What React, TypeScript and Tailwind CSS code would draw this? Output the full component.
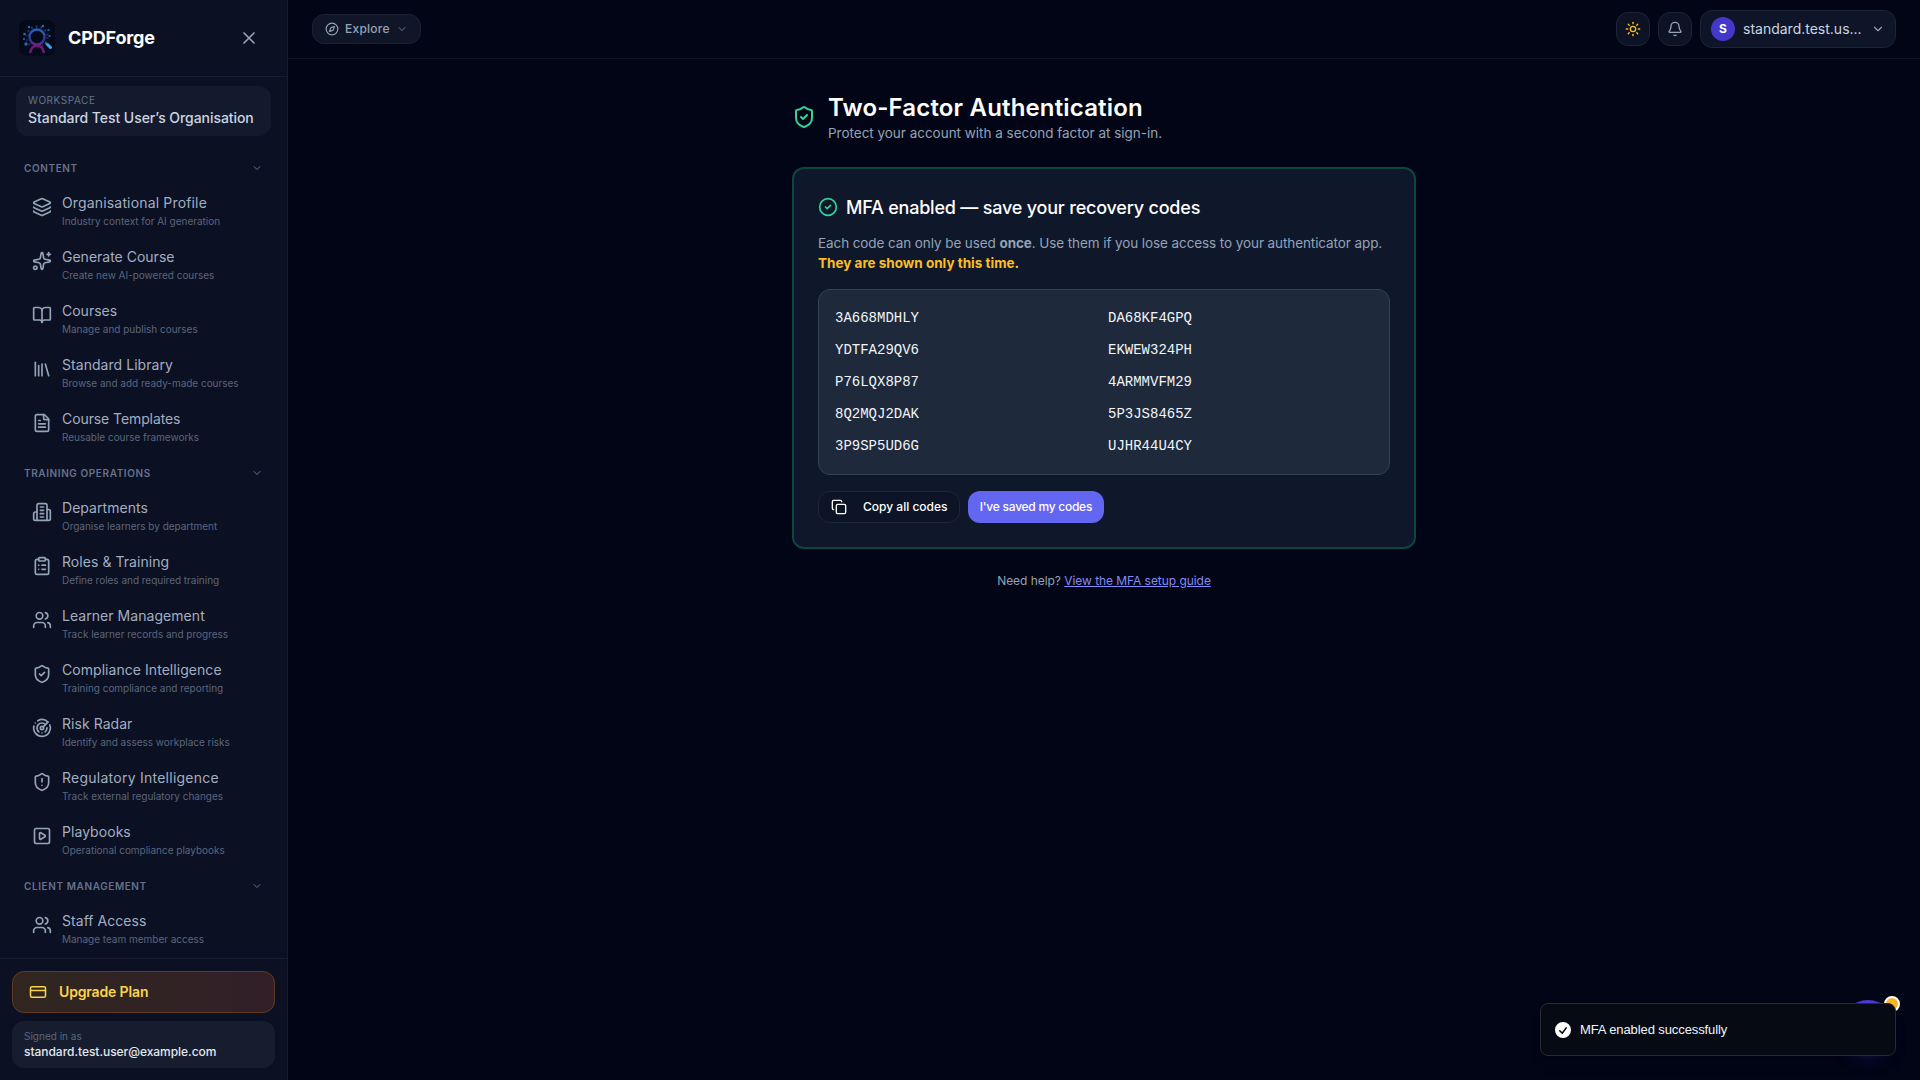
import {
  Bell,
  BookOpen,
  ChevronDown,
  CircleCheck,
  ClipboardList,
  Compass,
  Copy,
  CreditCard,
  FileText,
  Layers,
  Radar,
  ShieldAlert,
  ShieldCheck,
  Sparkles,
  SquarePlay,
  Sun,
  Users,
  X,
} from "lucide-react";
import type { ComponentType, ReactNode } from "react";

type IconType = ComponentType<{ className?: string }>;

interface NavItem {
  icon: IconType;
  title: string;
  hint: string;
  tracking?: string;
}

// Three upright books and one leaning
function LibraryIcon({ className }: { className?: string }) {
  return (
    <svg
      className={className}
      viewBox="0 0 24 24"
      fill="none"
      stroke="currentColor"
      strokeWidth={2}
      strokeLinecap="round"
      strokeLinejoin="round"
    >
      <path d="m16 6 4 14" />
      <path d="M12 6v14" />
      <path d="M8 8v12" />
      <path d="M4 4v16" />
    </svg>
  );
}

function DepartmentsIcon({ className }: { className?: string }) {
  return (
    <svg
      className={className}
      viewBox="0 0 24 24"
      fill="none"
      stroke="currentColor"
      strokeWidth={2}
      strokeLinecap="round"
      strokeLinejoin="round"
    >
      <path d="M6 22V4a2 2 0 0 1 2-2h8a2 2 0 0 1 2 2v18Z" />
      <path d="M6 12H4a2 2 0 0 0-2 2v6a2 2 0 0 0 2 2h2" />
      <path d="M18 9h2a2 2 0 0 1 2 2v9a2 2 0 0 1-2 2h-2" />
      <path d="M10 6h4M10 10h4M10 14h4M10 18h4" />
    </svg>
  );
}

const SECTIONS: { label: string; items: NavItem[] }[] = [
  {
    label: "CONTENT",
    items: [
      {
        icon: Layers,
        title: "Organisational Profile",
        hint: "Industry context for AI generation",
        tracking: "tracking-[0.16px]",
      },
      { icon: Sparkles, title: "Generate Course", hint: "Create new AI-powered courses", tracking: "tracking-normal" },
      { icon: BookOpen, title: "Courses", hint: "Manage and publish courses", tracking: "tracking-normal" },
      { icon: LibraryIcon, title: "Standard Library", hint: "Browse and add ready-made courses" },
      { icon: FileText, title: "Course Templates", hint: "Reusable course frameworks", tracking: "tracking-[-0.09px]" },
    ],
  },
  {
    label: "TRAINING OPERATIONS",
    items: [
      { icon: DepartmentsIcon, title: "Departments", hint: "Organise learners by department" },
      { icon: ClipboardList, title: "Roles & Training", hint: "Define roles and required training" },
      { icon: Users, title: "Learner Management", hint: "Track learner records and progress" },
      { icon: ShieldCheck, title: "Compliance Intelligence", hint: "Training compliance and reporting" },
      { icon: Radar, title: "Risk Radar", hint: "Identify and assess workplace risks" },
      {
        icon: ShieldAlert,
        title: "Regulatory Intelligence",
        hint: "Track external regulatory changes",
        tracking: "tracking-[0.25px]",
      },
      { icon: SquarePlay, title: "Playbooks", hint: "Operational compliance playbooks" },
    ],
  },
  {
    label: "CLIENT MANAGEMENT",
    items: [{ icon: Users, title: "Staff Access", hint: "Manage team member access" }],
  },
];

const CODES = [
  "3A668MDHLY",
  "DA68KF4GPQ",
  "YDTFA29QV6",
  "EKWEW324PH",
  "P76LQX8P87",
  "4ARMMVFM29",
  "8Q2MQJ2DAK",
  "5P3JS8465Z",
  "3P9SP5UD6G",
  "UJHR44U4CY",
];

function Logo() {
  return (
    <svg className="size-9 shrink-0" viewBox="0 0 36 36" fill="none">
      <defs>
        <linearGradient id="ring" x1="18" y1="6" x2="18" y2="30" gradientUnits="userSpaceOnUse">
          <stop stopColor="#2a73c4" />
          <stop offset="0.55" stopColor="#2b3796" />
          <stop offset="1" stopColor="#86198f" />
        </linearGradient>
      </defs>
      <rect width="36" height="36" rx="8" fill="#050a1a" />
      <circle cx="18" cy="17" r="7.5" stroke="url(#ring)" strokeWidth="2.5" />
      <circle cx="18" cy="17" r="10.5" stroke="url(#ring)" strokeWidth="2.2" strokeDasharray="1.6 3.2" opacity="0.6" />
      <path d="M11 33c1-5 3-7.500 7-7.500s6 2.500 7 7.500" stroke="#701a75" strokeWidth="2.5" />
      <path d="m26 22.500 2 2" stroke="#2563a8" strokeWidth="2" />
      <path d="m28.500 24.500 3 3" stroke="#38a5e8" strokeWidth="3" strokeLinecap="round" />
      <g fill="#2483bd" opacity="0.85">
        <circle cx="10" cy="7" r="1.300" />
        <circle cx="5.500" cy="14" r="1.300" />
        <circle cx="5" cy="19" r="1" />
        <circle cx="7" cy="24" r="1.700" />
        <circle cx="24" cy="6" r="1.200" />
        <circle cx="29.500" cy="10" r="1.100" />
        <circle cx="30.500" cy="16" r="1.100" />
      </g>
    </svg>
  );
}

function NavRow({ icon: Icon, title, hint, tracking = "tracking-[0.05px]" }: NavItem) {
  return (
    <a className="flex h-[54px] items-start gap-2.5 pl-8 pt-[9px]">
      <Icon className="mt-1 size-5 shrink-0 text-[#94a3b8]" />
      <span className="flex flex-col whitespace-nowrap">
        <span className={`text-sm leading-5 text-[#a3aec0] ${tracking}`}>{title}</span>
        <span className="text-[10px] leading-4 tracking-[-0.02px] text-[#5b667b]">{hint}</span>
      </span>
    </a>
  );
}

function Sidebar() {
  return (
    <aside className="flex h-full w-72 shrink-0 flex-col border-r border-[#161d31] bg-[#0b1023]">
      <div className="flex h-[77px] shrink-0 items-center border-b border-[#171e32] pl-[19px] pr-7">
        <Logo />
        <span className="ml-[13px] text-lg font-bold tracking-[-0.15px] text-white">CPDForge</span>
        <X className="ml-auto size-5 text-[#94a3b8]" />
      </div>

      <div className="mx-4 mt-[9px] h-[50px] shrink-0 rounded-xl bg-[#141a2d] px-3 pt-[7px]">
        <div className="text-[10px] leading-[15px] tracking-[0.55px] text-[#64748b]">WORKSPACE</div>
        <div className="whitespace-nowrap text-sm font-medium leading-5 tracking-[-0.06px] text-[#cbd5e1]">
          Standard Test User’s Organisation
        </div>
      </div>

      <nav className="mt-[13px] min-h-0 flex-1 overflow-hidden">
        {SECTIONS.map((section) => (
          <div key={section.label}>
            <div className="flex h-[35px] items-center justify-between pl-6 pr-6 pt-[3px] text-[#66728a]">
              <span className="text-[10px] font-semibold tracking-[0.6px]">{section.label}</span>
              <ChevronDown className="size-3" />
            </div>
            {section.items.map((item) => (
              <NavRow key={item.title} {...item} />
            ))}
          </div>
        ))}
      </nav>

      <div className="h-[122px] shrink-0 border-t border-[#171e32] px-3 pt-3">
        <div className="flex h-[42px] items-center gap-3 rounded-xl border border-[#633b22] bg-linear-to-r from-[#30261f] to-[#321f28] pl-4">
          <CreditCard className="size-[18px] text-[#fcd34d]" />
          <span className="text-sm font-semibold tracking-[-0.15px] text-[#fcd34d]">Upgrade Plan</span>
        </div>
        <div className="mt-2 h-[47px] rounded-xl bg-[#161d2f] px-3 pt-2">
          <div className="text-[10px] leading-[15px] text-[#5b667b]">Signed in as</div>
          <div className="text-xs font-medium leading-4 tracking-[-0.04px] text-[#e2e8f0]">
            standard.test.user@example.com
          </div>
        </div>
      </div>
    </aside>
  );
}

function IconButton({ children }: { children: ReactNode }) {
  return (
    <button className="flex size-[34px] items-center justify-center rounded-xl border border-[#1c2437] bg-[#0d1325]">
      {children}
    </button>
  );
}

function TopBar() {
  return (
    <header className="flex h-[59px] shrink-0 items-center border-b border-[#0f1527] pl-6 pr-6">
      <button className="flex h-[30px] w-[109px] items-center rounded-xl border border-[#1a2135] bg-[#101628] pl-3 text-[#94a3b8]">
        <Compass className="size-3.5" />
        <span className="ml-1.5 text-xs font-medium tracking-[0.25px]">Explore</span>
        <ChevronDown className="ml-1.5 size-3 opacity-70" />
      </button>
      <div className="ml-auto flex items-center gap-2">
        <IconButton>
          <Sun className="size-4 text-[#fbbf24]" />
        </IconButton>
        <IconButton>
          <Bell className="size-4 text-[#94a3b8]" />
        </IconButton>
        <button className="flex h-[38px] w-[196px] items-center rounded-xl border border-[#1c2437] bg-[#0f1528] pl-2.5">
          <span className="flex size-6 items-center justify-center rounded-full bg-[#4338ca] text-xs font-bold text-white">
            S
          </span>
          <span className="ml-2 text-sm text-[#cbd5e1]">standard.test.us...</span>
          <ChevronDown className="ml-auto mr-2.5 size-3.5 text-[#94a3b8]" />
        </button>
      </div>
    </header>
  );
}

function RecoveryCard() {
  return (
    <section className="mt-6 h-[382px] rounded-xl border-2 border-[#0d4541] bg-[#0f172a] px-6 pt-6">
      <div className="flex h-7 items-center gap-2">
        <CircleCheck className="size-5 text-[#34d399]" />
        <h2 className="whitespace-nowrap pt-0.5 text-lg font-medium tracking-[-0.2px] text-white">
          MFA enabled — save your recovery codes
        </h2>
      </div>
      <p className="mt-3 whitespace-nowrap text-[13.5px] leading-5 tracking-[-0.09px] text-[#94a3b8]">
        Each code can only be used <strong className="font-bold">once</strong>. Use them if you lose access to your
        authenticator app.
        <br />
        <strong className="font-bold tracking-normal text-[#fbbf24]">They are shown only this time.</strong>
      </p>
      <div className="mt-4 grid grid-cols-2 gap-2 rounded-xl border border-[#334155] bg-[#1e293b] p-4 font-['Liberation_Mono',monospace] text-sm leading-6 text-[#f1f5f9]">
        {CODES.map((code) => (
          <span key={code}>{code}</span>
        ))}
      </div>
      <div className="mt-4 flex gap-2 text-xs font-medium text-white">
        <button className="flex h-8 w-[142px] items-center rounded-xl border border-[#1e263a] bg-[#0e1427] pl-3">
          <Copy className="size-4" />
          <span className="ml-4 whitespace-nowrap">Copy all codes</span>
        </button>
        <button className="h-8 w-[136px] whitespace-nowrap rounded-xl bg-[#6366f1] tracking-[-0.25px]">
          I've saved my codes
        </button>
      </div>
    </section>
  );
}

function Toast() {
  return (
    <div className="absolute bottom-6 right-6 flex h-[53px] w-[356px] items-center gap-[7px] rounded-lg border border-[#272b33] bg-[#060a12] pl-3 shadow-lg">
      <svg className="size-5" viewBox="0 0 20 20" fill="#fff">
        <path
          fillRule="evenodd"
          clipRule="evenodd"
          d="M10 18a8 8 0 1 0 0-16 8 8 0 0 0 0 16Zm3.857-9.809a.75.75 0 0 0-1.214-.882l-3.483 4.79-1.88-1.88a.75.75 0 1 0-1.06 1.061l2.5 2.5a.75.75 0 0 0 1.137-.089l4-5.5Z"
        />
      </svg>
      <span className="font-['Liberation_Sans',sans-serif] text-[13px] tracking-[-0.1px] text-[#f1f5f9]">
        MFA enabled successfully
      </span>
    </div>
  );
}

export default function App() {
  return (
    <div className="relative flex h-[1080px] w-[1920px] overflow-hidden bg-[#020516] font-['Inter',sans-serif]">
      <Sidebar />
      <div className="flex min-w-0 flex-1 flex-col">
        <TopBar />
        <main className="mx-auto w-[624px] pt-8">
          <div className="flex h-[52px] items-center gap-3">
            <ShieldCheck className="size-6 text-[#34d399]" />
            <div className="whitespace-nowrap">
              <h1 className="pt-px text-2xl font-semibold leading-8 tracking-[0.16px] text-white">
                Two-Factor Authentication
              </h1>
              <p className="-mt-px text-[13.5px] leading-5 tracking-[-0.02px] text-[#94a3b8]">
                Protect your account with a second factor at sign-in.
              </p>
            </div>
          </div>
          <RecoveryCard />
          <p className="mt-6 text-center text-xs leading-4 tracking-[-0.05px] text-[#94a3b8]">
            Need help? <a className="text-[#818cf8] underline">View the MFA setup guide</a>
          </p>
        </main>
      </div>

      {/* help bubble, mostly hidden behind the toast */}
      <div className="absolute bottom-6 right-6 size-14 rounded-full bg-[#4f39d6] shadow-lg shadow-indigo-800/20" />
      <div className="absolute bottom-[68px] right-5 size-4 rounded-full border-2 border-white bg-[#fbb424]" />
      <Toast />
    </div>
  );
}
